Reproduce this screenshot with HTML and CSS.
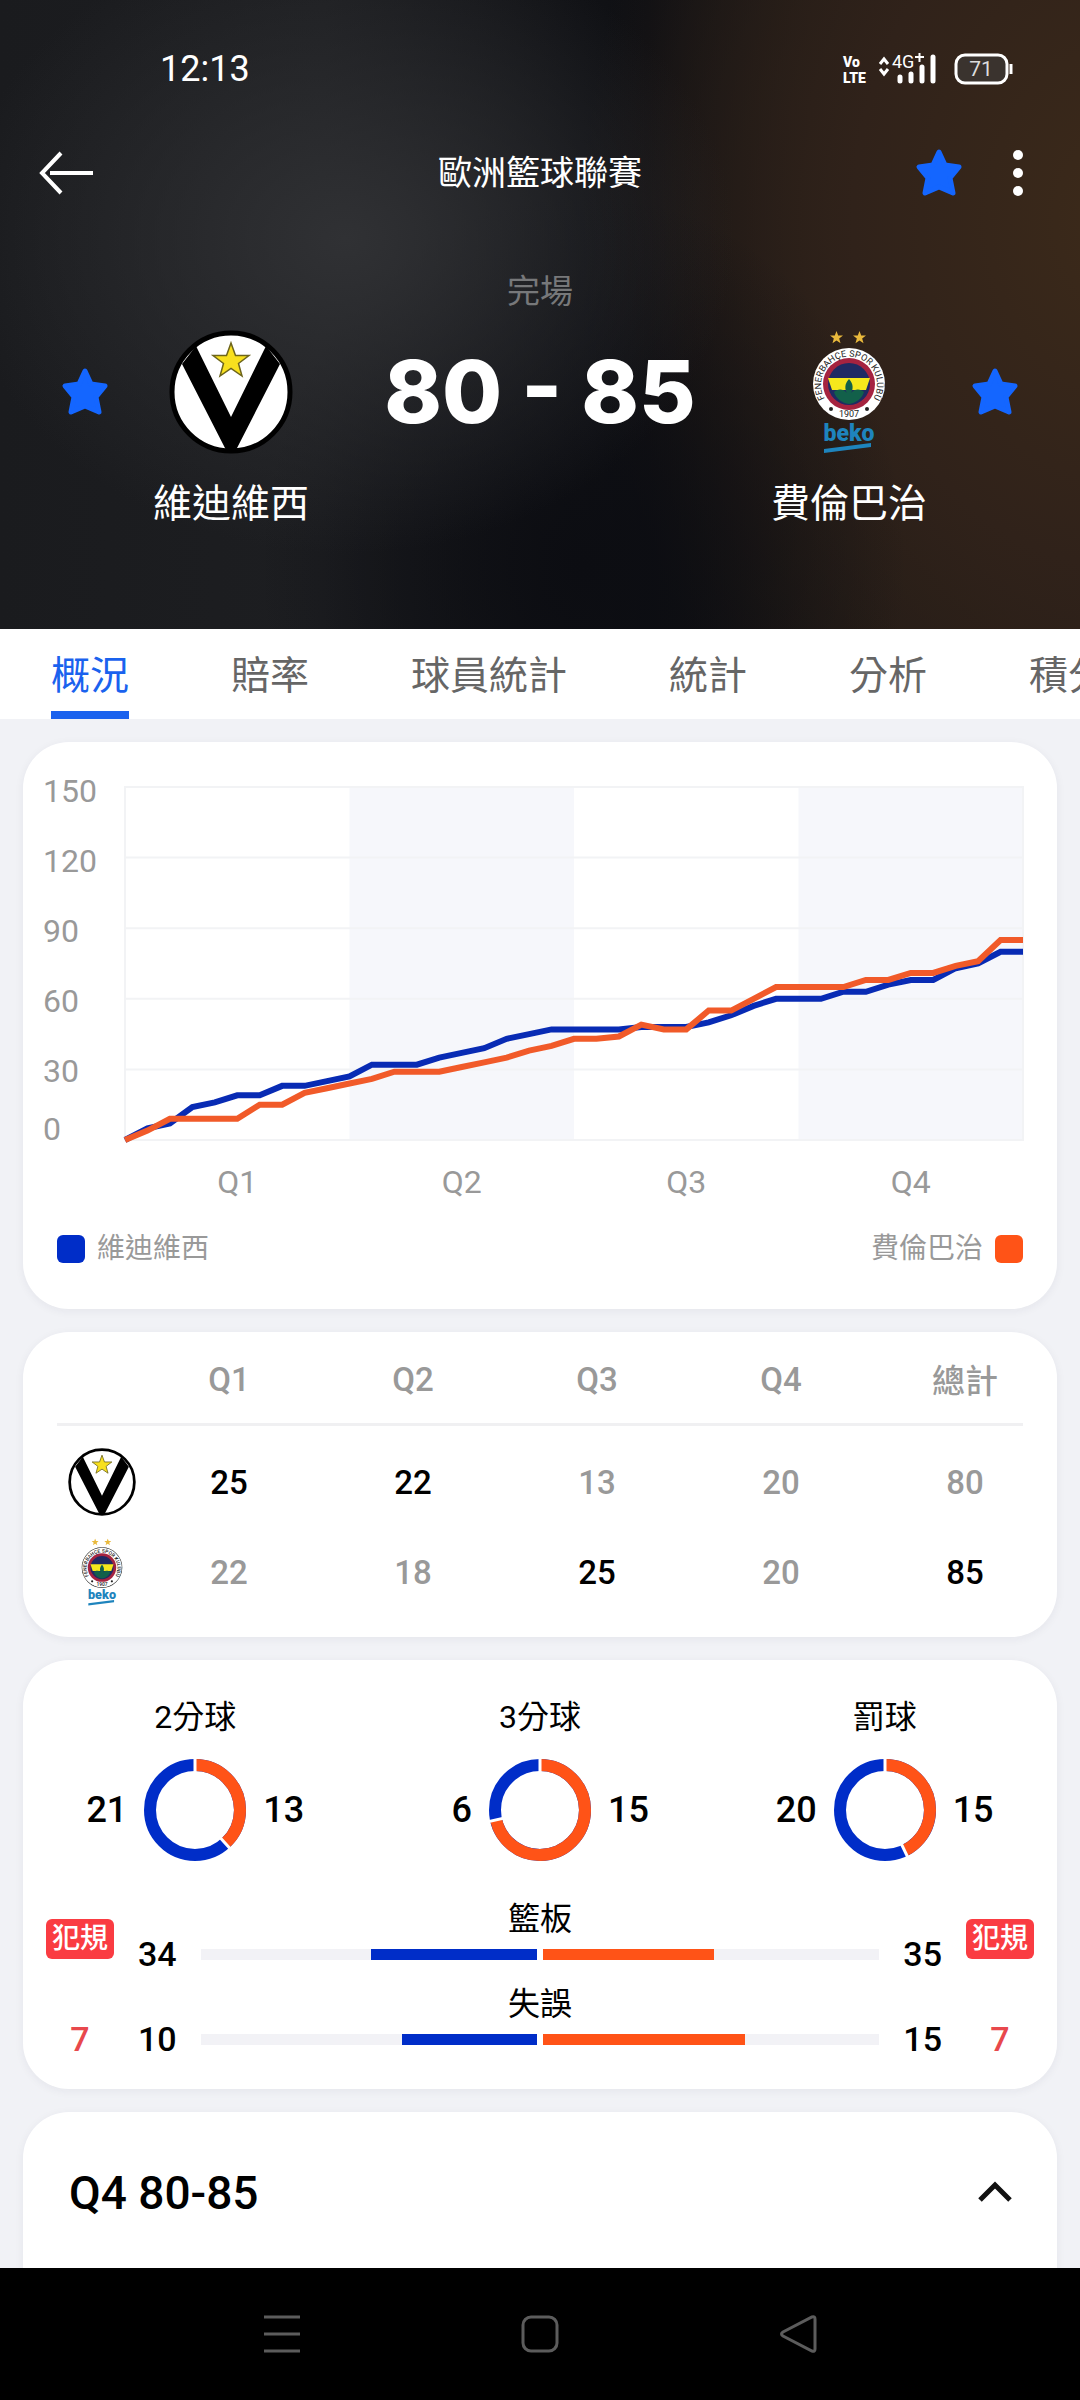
FILE: index.html
```html
<!DOCTYPE html>
<html lang="zh-Hant">
<head>
    <meta charset="UTF-8" />
    <meta name="viewport" content="width=device-width, initial-scale=1" />
    <title>維迪維西 80 - 85 費倫巴治 | 歐洲籃球聯賽</title>
    <link rel="stylesheet" href="styles.css">
</head>
<body>

<!-- shared shapes -->
<svg class="defs" aria-hidden="true">
    <symbol id="star" viewBox="0 0 50 50">
        <path d="M25 4 L31 17 L45 19 L36 30 L39 45 L25 39 L11 45 L14 30 L5 19 L19 17 Z" fill="#1466ff" stroke="#1466ff" stroke-width="5" stroke-linejoin="round"/>
    </symbol>
    <symbol id="small-star" viewBox="0 0 20 20">
        <path d="M10 0 L12.6 7 H20 L14.1 11.7 L16.2 19 L10 14.7 L3.8 19 L5.9 11.7 L0 7 H7.4 Z"/>
    </symbol>
    <symbol id="logo-home" viewBox="0 0 124 124">
        <circle cx="62" cy="62" r="59" fill="#fff" stroke="#000" stroke-width="5"/>
        <path d="M27 16 L62 87 L97 16 L111 34 L67 120 H57 L13 34 Z" fill="#000"/>
        <path d="M62 13 L66.500 25.500 H80 L69.500 33.500 L73 46 L62 38.500 L51 46 L54.500 33.500 L44 25.500 H57.500 Z" fill="#f8e01e" stroke="#6d651c" stroke-width="1.500"/>
    </symbol>
</svg>

<div class="screen">
    <header class="hero">
        <div class="status-bar">
            <span class="clock">12:13</span>
            <svg class="status-icons" viewBox="0 0 172 32" width="172" height="32">
                <g class="volte"><text x="2" y="14">Vo</text><text x="2" y="30">LTE</text></g>
                <path d="M39 11 L43 6 L47 11 M39 16 L43 21 L47 16" fill="none" stroke="#fff" stroke-width="3"/>
                <text class="network" x="51" y="15">4G</text>
                <path d="M74 4 H83 M78.500 0 V9" stroke="#fff" stroke-width="2"/>
                <path d="M59 24 V28 M70 21 V28 M81 14 V28 M92 4 V28" stroke="#fff" stroke-width="5" stroke-linecap="round"/>
                <rect x="115" y="2" width="51" height="28" rx="9" fill="#3a332e" stroke="#fff" stroke-width="3"/>
                <path d="M170 11 V21" stroke="#fff" stroke-width="3"/>
                <text class="battery" x="140" y="23" text-anchor="middle">71</text>
            </svg>
        </div>

        <div class="app-bar">
            <button class="icon-btn" aria-label="返回">
                <svg viewBox="0 0 56 46" width="56" height="46"><path d="M23 3 L4 23 L23 43 M12 23 H55" fill="none" stroke="#fff" stroke-width="4"/></svg>
            </button>
            <h1>歐洲籃球聯賽</h1>
            <div class="actions">
                <button class="icon-btn" aria-label="收藏"><svg width="50" height="50"><use href="#star"/></svg></button>
                <button class="icon-btn" aria-label="更多">
                    <svg viewBox="0 0 12 46" width="12" height="46" fill="#fff"><circle cx="6" cy="5" r="5"/><circle cx="6" cy="23" r="5"/><circle cx="6" cy="41" r="5"/></svg>
                </button>
            </div>
        </div>

        <p class="match-state">完場</p>

        <div class="match">
            <button class="icon-btn team-star" aria-label="收藏 維迪維西"><svg width="50" height="50"><use href="#star"/></svg></button>
            <div class="team">
                <svg class="team-logo"><use href="#logo-home"/></svg>
                <span>維迪維西</span>
            </div>
            <p class="score">80 - 85</p>
            <div class="team">
                <svg class="team-logo" viewBox="-21 0 124 124">
                    <g id="logo-away">
                        <use href="#small-star" x="22" y="1" width="13" height="13" fill="#e9b93c"/>
                        <use href="#small-star" x="45" y="1" width="13" height="13" fill="#e9b93c"/>
                        <circle cx="41" cy="54" r="36" fill="#fff"/>
                        <circle cx="41" cy="54" r="26" fill="#a52340"/>
                        <circle cx="41" cy="54" r="21" fill="#1f2a63"/>
                        <path d="M20 48 H62 L58 60 H24 Z" fill="#f6e81c"/>
                        <path d="M41 49 C46 54 45 60 43 63 C47 58 53 59 56 62 C54 69 48 73 41 74 C34 73 28 69 26 62 C29 59 35 58 39 63 C37 60 36 54 41 49 Z" fill="#12604a"/>
                        <path id="ring" d="M24 77 A28 28 0 1 1 58 77" fill="none"/>
                        <text class="ring-text"><textPath href="#ring" startOffset="50%" text-anchor="middle">FENERBAHÇE SPOR KULÜBÜ</textPath></text>
                        <text class="ring-text" x="41" y="87" text-anchor="middle">1907</text>
                        <circle cx="23" cy="79" r="2" fill="#222"/>
                        <circle cx="59" cy="79" r="2" fill="#222"/>
                        <text class="beko" x="41" y="111" text-anchor="middle">beko</text>
                        <path d="M16 119 L63 113 V117 L16 123 Z" fill="#1e84bd"/>
                    </g>
                </svg>
                <span>費倫巴治</span>
            </div>
            <button class="icon-btn team-star" aria-label="收藏 費倫巴治"><svg width="50" height="50"><use href="#star"/></svg></button>
        </div>
    </header>

    <nav class="tabs">
        <a class="active" href="#overview">概況</a>
        <a href="#odds">賠率</a>
        <a href="#players">球員統計</a>
        <a href="#stats">統計</a>
        <a href="#analysis">分析</a>
        <a href="#standings">積分</a>
    </nav>

    <main id="overview">
        <section class="card trend">
            <ul class="y-axis">
                <li>150</li><li>120</li><li>90</li><li>60</li><li>30</li><li>0</li>
            </ul>
            <div class="plot">
                <!-- x: 40 steps over the match, y: points -->
                <svg class="chart" viewBox="0 0 40 150" preserveAspectRatio="none">
                    <path class="band" d="M10 0 H20 V150 H10 Z M30 0 H40 V150 H30 Z"/>
                    <path class="grid" d="M0 0 H40 V150 H0 Z M0 30 H40 M0 60 H40 M0 90 H40 M0 120 H40"/>
                    <g transform="translate(0 150) scale(1 -1)">
                        <polyline class="home" points="0,0 1,5 2,7 3,14 4,16 5,19 6,19 7,23 8,23 9,25 10,27 11,32 12,32 13,32 14,35 15,37 16,39 17,43 18,45 19,47 20,47 21,47 22,47 23,48 24,48 25,48 26,50 27,53 28,57 29,60 30,60 31,60 32,63 33,63 34,66 35,68 36,68 37,73 38,75 39,80 40,80"/>
                        <polyline class="away" points="0,0 1,4 2,9 3,9 4,9 5,9 6,15 7,15 8,20 9,22 10,24 11,26 12,29 13,29 14,29 15,31 16,33 17,35 18,38 19,40 20,43 21,43 22,44 23,49 24,47 25,47 26,55 27,55 28,60 29,65 30,65 31,65 32,65 33,68 34,68 35,71 36,71 37,74 38,76 39,85 40,85"/>
                    </g>
                </svg>
                <ul class="x-axis"><li>Q1</li><li>Q2</li><li>Q3</li><li>Q4</li></ul>
            </div>
            <div class="legend">
                <span><i class="swatch home-bg"></i>維迪維西</span>
                <span>費倫巴治<i class="swatch away-bg"></i></span>
            </div>
        </section>

        <section class="card">
            <table class="quarters">
                <thead>
                    <tr><th class="logo-col"></th><th>Q1</th><th>Q2</th><th>Q3</th><th>Q4</th><th>總計</th></tr>
                </thead>
                <tbody>
                    <tr>
                        <td class="logo-col"><svg role="img" aria-label="維迪維西"><use href="#logo-home"/></svg></td>
                        <td class="win">25</td><td class="win">22</td><td>13</td><td>20</td><td>80</td>
                    </tr>
                    <tr>
                        <td class="logo-col"><svg viewBox="-21 0 124 124" role="img" aria-label="費倫巴治"><circle cx="41" cy="54" r="36" fill="none" stroke="#333" stroke-width="2"/><use href="#logo-away"/></svg></td>
                        <td>22</td><td>18</td><td class="win">25</td><td>20</td><td class="win">85</td>
                    </tr>
                </tbody>
            </table>
        </section>

        <section class="card team-stats">
            <!-- arc lengths are percentages of the ring, away team drawn clockwise from the top -->
            <div class="shots">
                <div class="shot">
                    <h2>2分球</h2>
                    <b>21</b>
                    <svg class="donut" viewBox="0 0 102 102">
                        <circle class="home" cx="51" cy="51" r="45"/>
                        <circle class="away" cx="51" cy="51" r="45" pathLength="100" stroke-dasharray="38.2 61.8"/>
                        <path d="M51 51 V0 M51 51 L91 95"/>
                    </svg>
                    <b>13</b>
                </div>
                <div class="shot">
                    <h2>3分球</h2>
                    <b>6</b>
                    <svg class="donut" viewBox="0 0 102 102">
                        <circle class="home" cx="51" cy="51" r="45"/>
                        <circle class="away" cx="51" cy="51" r="45" pathLength="100" stroke-dasharray="71.4 28.6"/>
                        <path d="M51 51 V0 M51 51 L-7 64"/>
                    </svg>
                    <b>15</b>
                </div>
                <div class="shot">
                    <h2>罰球</h2>
                    <b>20</b>
                    <svg class="donut" viewBox="0 0 102 102">
                        <circle class="home" cx="51" cy="51" r="45"/>
                        <circle class="away" cx="51" cy="51" r="45" pathLength="100" stroke-dasharray="42.9 57.1"/>
                        <path d="M51 51 V0 M51 51 L77 105"/>
                    </svg>
                    <b>15</b>
                </div>
            </div>

            <div class="versus">
                <div class="fouls"><span class="badge">犯規</span><b>7</b></div>
                <div class="bars">
                    <div class="bar-row">
                        <h2>籃板</h2>
                        <b>34</b>
                        <div class="bar">
                            <div class="track left"><div class="home-bg" style="width: 49.3%"></div></div>
                            <div class="track"><div class="away-bg" style="width: 50.7%"></div></div>
                        </div>
                        <b>35</b>
                    </div>
                    <div class="bar-row">
                        <h2>失誤</h2>
                        <b>10</b>
                        <div class="bar">
                            <div class="track left"><div class="home-bg" style="width: 40%"></div></div>
                            <div class="track"><div class="away-bg" style="width: 60%"></div></div>
                        </div>
                        <b>15</b>
                    </div>
                </div>
                <div class="fouls"><span class="badge">犯規</span><b>7</b></div>
            </div>
        </section>

        <section class="card plays">
            <button class="period">
                <span>Q4 80-85</span>
                <svg viewBox="0 0 36 24" width="36" height="24"><path d="M3 19 L18 4 L33 19" fill="none" stroke="#111" stroke-width="5"/></svg>
            </button>
        </section>
    </main>

    <div class="system-nav">
        <button class="icon-btn" aria-label="最近"><svg viewBox="0 0 38 38" width="38" height="38"><path d="M1 2 H37 M1 19 H37 M1 36 H37"/></svg></button>
        <button class="icon-btn" aria-label="主頁"><svg viewBox="0 0 38 38" width="38" height="38"><rect x="2" y="2" width="34" height="34" rx="8"/></svg></button>
        <button class="icon-btn" aria-label="返回"><svg viewBox="0 0 38 38" width="38" height="38"><path d="M33 2 Q36 1 36 4 V34 Q36 37 33 36 L4 21 Q1 19 4 17 Z"/></svg></button>
    </div>
</div>

</body>
</html>
```
FILE: styles.css
```css
* { box-sizing: border-box; margin: 0; padding: 0; }
body { font-family: Roboto, "Noto Sans CJK TC", sans-serif; background: #f1f2f6; color: #000; }
ul { list-style: none; }
svg { display: block; }
button { border: none; background: none; font: inherit; color: inherit; cursor: pointer; }
h1, h2 { font-weight: 400; }
b { font-weight: 500; }
.defs { position: absolute; width: 0; height: 0; }
.screen { display: flex; flex-direction: column; height: 100vh; overflow: hidden; }
.home-bg { background: #002dc8; }
.away-bg { background: #ff5317; }

/* header */
.hero {
    flex: none;
    padding-bottom: 101px;
    color: #fff;
    background:
        radial-gradient(ellipse 36% 50% at 32% 38%, #303134, transparent),
        radial-gradient(ellipse 30% 60% at 54% 90%, #0c0d12, transparent),
        radial-gradient(ellipse 50% 110% at 104% 35%, #3c2a1a 0%, #30221a 50%, transparent),
        linear-gradient(90deg, #1a1b1e, #1d1e21 30%, #0e0f13 60%, #1c1815 75%, #241c16);
}
.status-bar { display: flex; justify-content: space-between; align-items: center; height: 138px; padding: 0 67px 0 160px; }
.clock { font-size: 36px; }
.status-icons { fill: #fff; }
.volte { font-size: 14px; font-weight: 900; }
.network { font-size: 18px; }
.battery { font-size: 21px; fill: #ddd; }
.app-bar { display: grid; grid-template-columns: 1fr auto 1fr; align-items: center; height: 70px; padding: 0 38px; }
.app-bar h1 { font-size: 34px; line-height: 48px; }
.actions { display: flex; justify-content: flex-end; align-items: center; gap: 48px; padding-right: 18px; }
.icon-btn { justify-self: start; }
.match-state { margin-top: 64px; font-size: 33px; line-height: 40px; text-align: center; color: #77787a; }
.match { display: flex; align-items: flex-start; margin-top: 18px; padding: 0 60px; }
.team-star { display: flex; align-items: center; height: 124px; }
.team { display: flex; flex-direction: column; align-items: center; gap: 26px; margin: 0 43px; font-size: 39px; line-height: 48px; white-space: nowrap; }
.team-logo { width: 124px; height: 124px; }
.ring-text { font-size: 9px; fill: #222; }
.beko { font-size: 23px; font-weight: 900; fill: #1e84bd; }
.score { flex: 1; font-family: Inter, sans-serif; font-size: 87px; font-weight: 800; line-height: 124px; text-align: center; white-space: nowrap; }

/* tabs */
.tabs { flex: none; display: flex; gap: 102px; height: 90px; padding: 0 51px; overflow: hidden; background: #fff; }
.tabs a { flex: none; color: #666; font-size: 39px; line-height: 94px; height: 90px; text-decoration: none; }
.tabs .active { color: #1a62ee; border-bottom: 8px solid #1a62ee; }

/* cards */
main { flex: 1; min-height: 0; display: flex; flex-direction: column; gap: 23px; padding: 23px 23px 0; overflow: hidden; }
.card { flex: none; background: #fff; border-radius: 46px; box-shadow: 0 2px 10px rgba(30, 30, 60, 0.06); }

.trend { display: grid; grid-template-columns: 82px 1fr; padding: 33px 34px 46px 20px; color: #999; font-size: 32px; line-height: 32px; }
.y-axis { display: grid; grid-template-rows: repeat(4, 70px) 58px 32px; }
.plot { padding-top: 12px; }
.chart { width: 100%; height: 353px; overflow: visible; }
.chart * { vector-effect: non-scaling-stroke; }
.band { fill: #f6f7fb; }
.grid { fill: none; stroke: #f2f3f5; stroke-width: 2px; }
.chart polyline { fill: none; stroke-width: 6px; }
.chart .home { stroke: #082bb4; }
.chart .away { stroke: #f15a29; }
.x-axis { display: grid; grid-template-columns: repeat(4, 1fr); margin-top: 26px; text-align: center; }
.legend { grid-column: 1 / 3; display: flex; justify-content: space-between; margin-top: 37px; padding-left: 14px; font-size: 28px; line-height: 28px; }
.legend span { display: flex; align-items: center; gap: 12px; }
.swatch { width: 28px; height: 28px; border-radius: 6px; }

.quarters { width: 100%; table-layout: fixed; border-collapse: collapse; margin-bottom: 20px; color: #999; font-size: 33px; text-align: center; }
.quarters th, .quarters td { height: 90px; font-weight: 500; }
.quarters th { height: 94px; }
.quarters thead { background: linear-gradient(#f0f0f2, #f0f0f2) bottom center / calc(100% - 68px) 3px no-repeat; }
.quarters tbody tr:first-child td { height: 101px; padding-top: 11px; }
.quarters .logo-col { width: 114px; padding-left: 45px; }
.quarters .logo-col svg { width: 68px; height: 68px; }
.quarters .win { color: #000; }

.team-stats { padding: 37px 0 31px; }
.shots { display: grid; grid-template-columns: repeat(3, 1fr); }
.shot { display: grid; grid-template-columns: 1fr 102px 1fr; column-gap: 17px; row-gap: 22px; align-items: center; font-size: 36px; }
.shot h2 { grid-column: 1 / 4; font-size: 32px; line-height: 40px; text-align: center; }
.shot h2 + b { text-align: right; }
.donut circle { fill: none; stroke-width: 12px; }
.donut .home { stroke: #002dc8; }
.donut .away { stroke: #ff5317; transform: rotate(-90deg); transform-origin: center; }
.donut path { stroke: #fff; stroke-width: 3px; }
.versus { display: flex; gap: 24px; margin-top: 42px; padding: 0 23px; }
.fouls { display: flex; flex-direction: column; justify-content: space-between; align-items: center; padding-top: 16px; font-size: 34px; line-height: 38px; color: #e8484c; }
.badge { padding: 0 6px; border-radius: 6px; background: #fa3c42; color: #fff; font-size: 28px; font-weight: 500; line-height: 40px; }
.bars { flex: 1; display: grid; row-gap: 15px; }
.bar-row { display: grid; grid-template-columns: auto 1fr auto; column-gap: 24px; align-items: center; font-size: 34px; line-height: 38px; }
.bar-row h2 { grid-column: 1 / 4; font-size: 32px; line-height: 32px; text-align: center; }
.bar { display: grid; grid-template-columns: 1fr 1fr; gap: 6px; }
.track { display: flex; background: #f2f2f6; }
.track div { height: 11px; }
.left { justify-content: flex-end; }

.plays { min-height: 240px; }
.period { display: flex; justify-content: space-between; align-items: center; width: 100%; height: 162px; padding: 0 44px 0 46px; font-size: 46px; font-weight: 500; }

/* phone navigation */
.system-nav { flex: none; display: flex; justify-content: center; align-items: center; gap: 220px; height: 132px; background: #000; }
.system-nav svg { fill: none; stroke: #5c5c5c; stroke-width: 3px; }
```
